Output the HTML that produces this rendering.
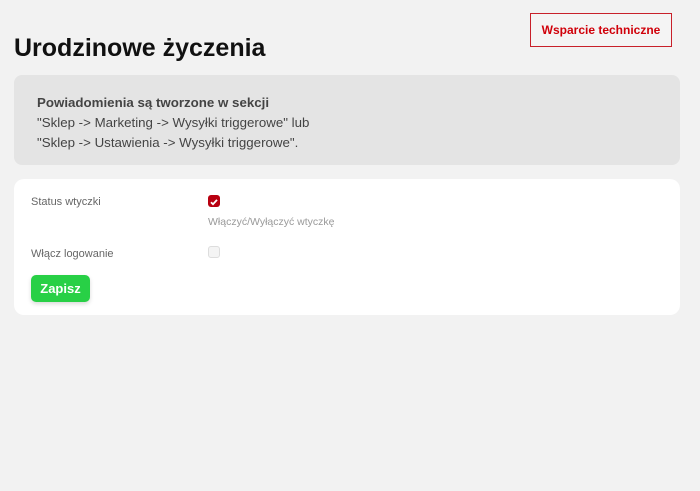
<!DOCTYPE html>
<html><head><meta charset="utf-8"><style>
body{margin:0;width:700px;height:491px;background:#f2f2f2;font-family:"Liberation Sans",sans-serif;position:relative;overflow:hidden}
.btn{position:absolute;left:530px;top:13px;width:142px;height:34px;border:1px solid #c8202a;box-sizing:border-box;color:#d0000a;font-weight:bold;font-size:12px;text-align:center;line-height:32px;background:#f4f4f4}
h1{position:absolute;left:14px;top:34px;margin:0;font-size:25px;font-weight:bold;color:#111}
.info{position:absolute;left:14px;top:75px;width:666px;height:90px;background:#e4e4e4;border-radius:8px;font-size:13.3px;color:#444;box-sizing:border-box;padding:18px 23px;line-height:20px}
.card{position:absolute;left:14px;top:179px;width:666px;height:136px;background:#fff;border-radius:10px}
.lbl{position:absolute;left:17px;font-size:11px;color:#666}
.cb{position:absolute;left:194px;width:12px;height:12px;border-radius:3px}
.save{position:absolute;left:17px;top:96px;width:59px;height:27px;background:#28d046;border-radius:5px;color:#fff;font-weight:bold;font-size:13px;text-align:center;line-height:27px;box-shadow:0 2px 4px rgba(0,0,0,.15)}
</style></head><body>
<div class="btn">Wsparcie techniczne</div>
<h1>Urodzinowe życzenia</h1>
<div class="info"><b>Powiadomienia są tworzone w sekcji</b><br>"Sklep -&gt; Marketing -&gt; Wysyłki triggerowe" lub<br>"Sklep -&gt; Ustawienia -&gt; Wysyłki triggerowe".</div>
<div class="card">
<div class="lbl" style="top:17px">Status wtyczki</div>
<div class="cb" style="top:16px;background:#b80010"><svg width="12" height="12" viewBox="0 0 12 12"><path d="M3 6.2l2 2 4-4.3" stroke="#fff" stroke-width="1.8" fill="none"/></svg></div>
<div class="lbl" style="left:194px;top:37px;color:#999;font-size:10.5px">Włączyć/Wyłączyć wtyczkę</div>
<div class="lbl" style="top:69px">Włącz logowanie</div>
<div class="cb" style="top:67px;border:1px solid #ddd;background:#f4f4f4;box-sizing:border-box"></div>
<div class="save">Zapisz</div>
</div>
</body></html>
